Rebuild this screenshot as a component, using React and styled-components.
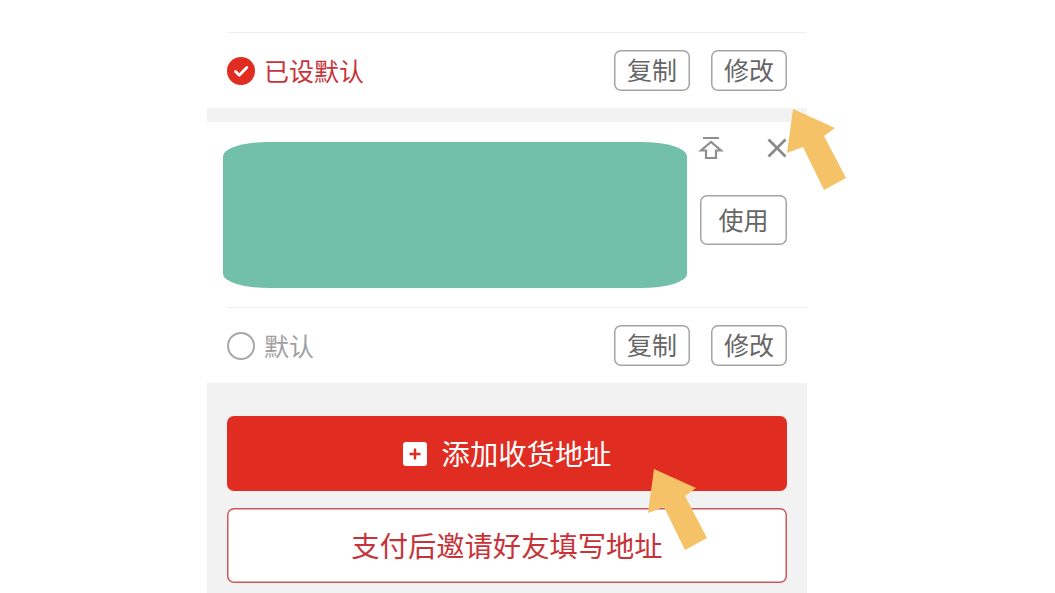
import React from "react";
import styled, { createGlobalStyle } from "styled-components";

const GlobalStyle = createGlobalStyle`
  html, body {
    margin: 0;
    padding: 0;
    height: 100%;
    overflow: hidden;
    background: #ffffff;
    font-family: "Noto Sans CJK SC", "Noto Sans", sans-serif;
  }
`;

function CheckIcon() {
  return (
    <svg width="28" height="28" viewBox="0 0 28 28">
      <circle cx="14" cy="14" r="14" fill="#e12c21" />
      <path d="M8.500 14.500l3.800 3.800L19.800 10.500" fill="none" stroke="#fff" strokeWidth="2.800" strokeLinecap="round" strokeLinejoin="round" />
    </svg>
  );
}

function PinIcon() {
  return (
    <svg width="26" height="24" viewBox="0 0 26 24">
      <path d="M5 2h16" stroke="#8f8f8f" strokeWidth="2" />
      <path d="M13 6L3 14.500H8V22H18V14.500H23L13 6z" fill="none" stroke="#8f8f8f" strokeWidth="2.200" strokeLinejoin="miter" />
    </svg>
  );
}

function CloseIcon() {
  return (
    <svg width="20" height="20" viewBox="0 0 20 20">
      <path d="M1.500 1.500L18.500 18.500M18.500 1.500L1.500 18.500" stroke="#8a8a8a" strokeWidth="2.700" />
    </svg>
  );
}

function PlusIcon() {
  return (
    <PlusBox>
      <svg width="12" height="12" viewBox="0 0 12 12">
        <path d="M6 0.500V11.500M0.500 6H11.500" stroke="#e12c21" strokeWidth="2.400" />
      </svg>
    </PlusBox>
  );
}

function Arrow({ left, top }) {
  return (
    <ArrowSvg $left={left} $top={top} width="60" height="82" viewBox="0 0 60 82">
      <path d="M6 0L48 19L37 27L59 69L37 81L16 38L0 44Z" fill="#f5c267" />
    </ArrowSvg>
  );
}

function ActionRow({ checked }) {
  return (
    <RowFrame>
      <DefaultToggle>
        {checked ? <CheckIcon /> : <EmptyRadio />}
        <DefaultLabel $checked={checked}>{checked ? "已设默认" : "默认"}</DefaultLabel>
      </DefaultToggle>
      <RowButtons>
        <SmallButton>复制</SmallButton>
        <SmallButton>修改</SmallButton>
      </RowButtons>
    </RowFrame>
  );
}

export default function App() {
  return (
    <>
      <GlobalStyle />
      <Page>
        <Column>
          <TopSpace />
          <ActionRow checked />
          <GrayGap />
          <AddressBody>
            <Redacted />
            <SideTools>
              <IconRow>
                <PinIcon />
                <CloseIcon />
              </IconRow>
              <UseButton>使用</UseButton>
            </SideTools>
          </AddressBody>
          <ActionRow />
          <Footer>
            <AddButton>
              <PlusIcon />
              添加收货地址
            </AddButton>
            <InviteButton>支付后邀请好友填写地址</InviteButton>
          </Footer>
        </Column>
        <Arrow left={787} top={109} />
        <Arrow left={648} top={469} />
      </Page>
    </>
  );
}

const Page = styled.div`
  position: relative;
  height: 593px;
  overflow: hidden;
  padding-left: 207px;
`;

const Column = styled.div`
  width: 600px;
  background: #ffffff;
`;

const TopSpace = styled.div`
  height: 32px;
`;

const RowFrame = styled.div`
  display: flex;
  align-items: center;
  justify-content: space-between;
  box-sizing: border-box;
  height: 76px;
  margin-left: 20px;
  padding-right: 20px;
  border-top: 1px solid #efefef;
`;

const DefaultToggle = styled.div`
  display: flex;
  align-items: center;
  gap: 9px;
`;

const EmptyRadio = styled.span`
  box-sizing: border-box;
  width: 28px;
  height: 28px;
  border: 2px solid #a8a8a8;
  border-radius: 50%;
`;

const DefaultLabel = styled.span`
  padding-bottom: 1px;
  font-size: 25px;
  line-height: 30px;
  color: ${(p) => (p.$checked ? "#c8333a" : "#a0a0a0")};
`;

const RowButtons = styled.div`
  display: flex;
  gap: 21px;
`;

const SmallButton = styled.button`
  box-sizing: border-box;
  width: 76px;
  height: 41px;
  padding: 0 0 3px;
  background: #ffffff;
  border: none;
  border-radius: 7px;
  box-shadow: inset 0 0 0 1.500px #a4a4a4;
  font-family: inherit;
  font-size: 25px;
  color: #666666;
`;

const GrayGap = styled.div`
  height: 14px;
  background: #f2f2f2;
`;

const AddressBody = styled.div`
  display: flex;
  box-sizing: border-box;
  height: 185px;
  padding: 14px 20px 0 16px;
`;

const Redacted = styled.div`
  width: 464px;
  height: 146px;
  margin-top: 6px;
  background: #73c0a9;
  border-radius: 46px / 14px;
`;

const SideTools = styled.div`
  display: flex;
  flex: 1;
  flex-direction: column;
  align-items: flex-end;
`;

const IconRow = styled.div`
  display: flex;
  align-items: center;
  justify-content: space-between;
  box-sizing: border-box;
  width: 100%;
  height: 24px;
  padding-left: 11px;
`;

const UseButton = styled(SmallButton)`
  width: 87px;
  height: 50px;
  margin-top: 35px;
`;

const Footer = styled.div`
  display: flex;
  flex-direction: column;
  gap: 17px;
  padding: 33px 20px 10px;
  background: #f2f2f2;
`;

const AddButton = styled.button`
  display: flex;
  align-items: center;
  justify-content: center;
  gap: 15px;
  height: 75px;
  padding: 0 0 3px;
  background: #e12c21;
  border: none;
  border-radius: 7px;
  font-family: inherit;
  font-size: 28.300px;
  color: #ffffff;
`;

const PlusBox = styled.span`
  display: flex;
  align-items: center;
  justify-content: center;
  width: 24px;
  height: 24px;
  margin-top: 3px;
  background: #ffffff;
  border-radius: 3px;
`;

const InviteButton = styled.button`
  box-sizing: border-box;
  height: 75px;
  padding: 0 0 3px;
  background: #ffffff;
  border: none;
  border-radius: 7px;
  box-shadow: inset 0 0 0 1.500px #c9585a;
  font-family: inherit;
  font-size: 28.300px;
  color: #c8333a;
`;

const ArrowSvg = styled.svg`
  position: absolute;
  left: ${(p) => p.$left}px;
  top: ${(p) => p.$top}px;
`;
